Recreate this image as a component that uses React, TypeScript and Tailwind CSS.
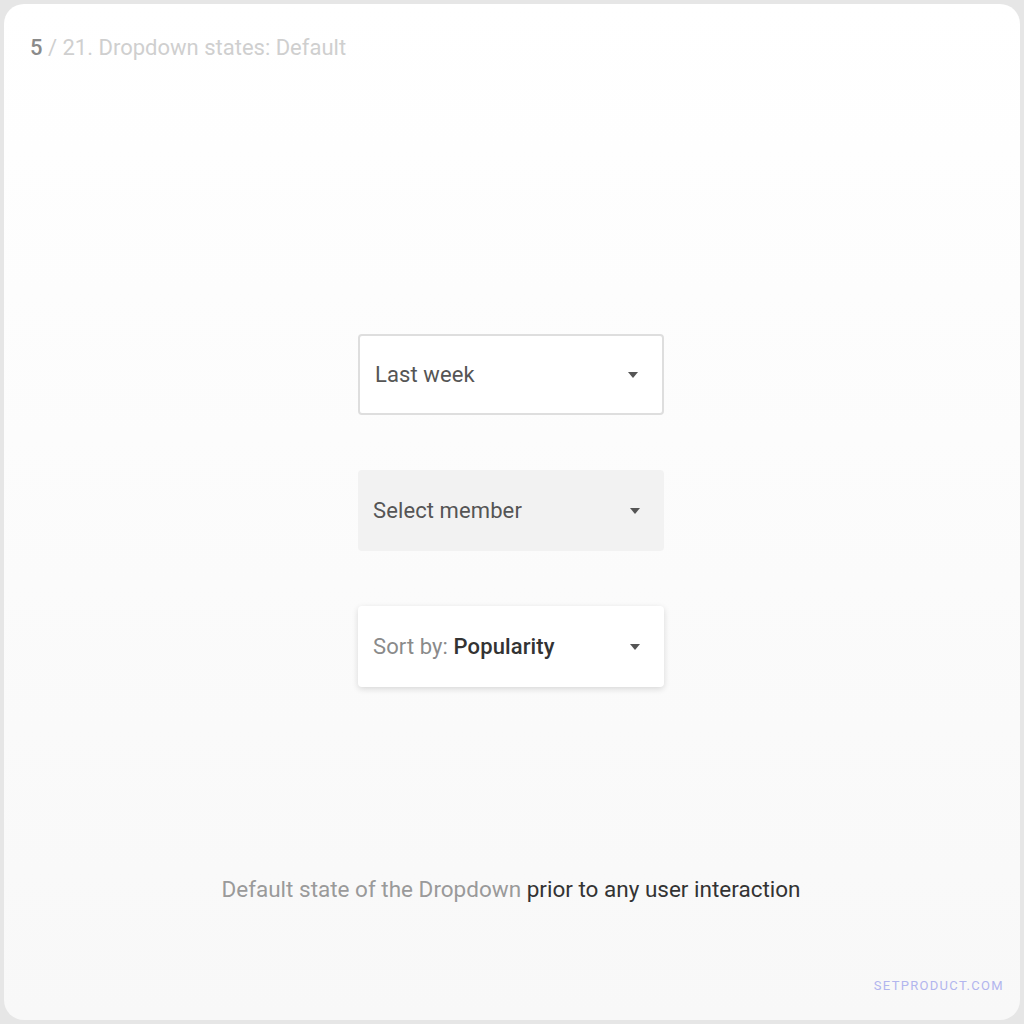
import React from "react";

const Caret = () => (
  <svg width="10" height="6" viewBox="0 0 10 6" className="shrink-0">
    <path d="M0 0h10L5 6z" fill="#555555" />
  </svg>
);

const Dropdown = ({ className, children }: { className: string; children: React.ReactNode }) => (
  <div className={`w-[306px] h-[81px] flex items-center justify-between pl-[15px] pr-[24px] rounded-[4px] ${className}`}>
    <span className="text-[22px] leading-none tracking-[0.1px]">{children}</span>
    <Caret />
  </div>
);

const App = () => {
  return (
    <div className="w-full h-screen bg-[#e6e6e6] p-[4px] font-['Roboto',sans-serif]">
      <div className="relative w-full h-full rounded-[20px] bg-gradient-to-b from-white to-[#f8f8f8] flex flex-col">
        {/* Header */}
        <div className="pl-[26px] pt-[31px] text-[22px] leading-[26px] text-[#cfcfcf]">
          <span className="text-[#8a8a8a] font-medium">5</span> / 21. Dropdown states: Default
        </div>

        {/* Dropdowns */}
        <div className="mt-[273px] flex flex-col items-center gap-[55px] pr-[2px]">
          <Dropdown className="bg-white border-2 border-[#dedede] text-[#555555]">Last week</Dropdown>
          <Dropdown className="bg-[#f2f2f2] text-[#555555]">Select member</Dropdown>
          <Dropdown className="bg-white shadow-[0_2px_6px_rgba(0,0,0,0.14)] text-[#8a8a8a]">
            Sort by: <span className="text-[#333333] font-medium">Popularity</span>
          </Dropdown>
        </div>

        {/* Caption */}
        <div className="mt-[188px] text-center text-[22.5px] leading-[28px] text-[#9a9a9a] pr-[2px]">
          Default state of the Dropdown <span className="text-[#333333]">prior to any user interaction</span>
        </div>

        {/* Footer */}
        <div className="mt-auto self-end pr-[16px] pb-[28px] text-[13px] leading-none tracking-[1.3px] text-[#b2b5ee]">
          SETPRODUCT.COM
        </div>
      </div>
    </div>
  );
};

export default App;
